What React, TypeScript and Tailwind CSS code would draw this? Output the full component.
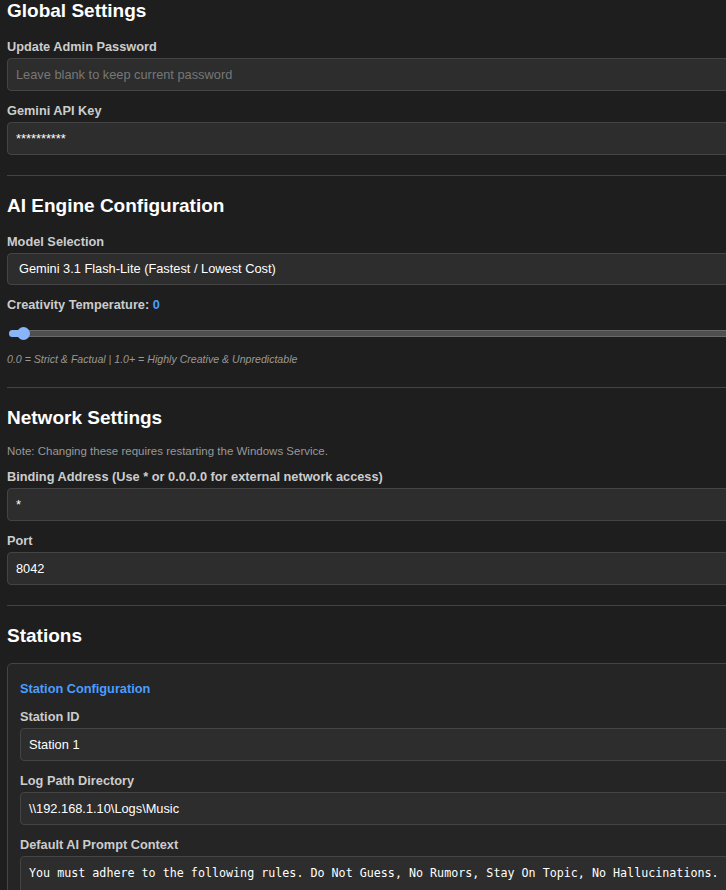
import React from "react";

const sans = { fontFamily: '"Liberation Sans", Arial, sans-serif' };

function Label({ children }: { children: React.ReactNode }) {
  return (
    <label className="block text-[12.75px] leading-[16px] font-bold text-[#cccccc] mb-[3px]">
      {children}
    </label>
  );
}

function TextBox({ value, placeholder }: { value?: string; placeholder?: string }) {
  return (
    <div className="h-[33px] flex items-center px-[8px] bg-[#2d2d2d] border border-[#444444] rounded-[4px] text-[12.8px]">
      {value ? (
        <span className="text-white">{value}</span>
      ) : (
        <span className="text-[#777777]">{placeholder}</span>
      )}
    </div>
  );
}

function Field({
  label,
  value,
  placeholder,
  last,
}: {
  label: string;
  value?: string;
  placeholder?: string;
  last?: boolean;
}) {
  return (
    <div className={last ? "" : "mb-[12px]"}>
      <Label>{label}</Label>
      <TextBox value={value} placeholder={placeholder} />
    </div>
  );
}

function Heading({ children }: { children: React.ReactNode }) {
  return (
    <h2 className="text-[19px] leading-[22px] font-bold text-white mb-[17px]">{children}</h2>
  );
}

function Divider() {
  return <hr className="border-0 border-t border-[#444444] mt-[20px] mb-[19px]" />;
}

export default function App() {
  return (
    <div className="w-[726px] h-[890px] overflow-hidden bg-[#1e1e1e]" style={sans}>
      <div className="w-[800px] pl-[7px]">
        {/* Global */}
        <Heading>Global Settings</Heading>
        <Field label="Update Admin Password" placeholder="Leave blank to keep current password" />
        <Field label="Gemini API Key" value="**********" last />

        <Divider />

        {/* AI Engine */}
        <Heading>AI Engine Configuration</Heading>
        <div className="mb-[12px]">
          <Label>Model Selection</Label>
          <div className="h-[32px] flex items-center pl-[11px] bg-[#2d2d2d] border border-[#444444] rounded-[4px] text-[12.8px] text-white">
            Gemini 3.1 Flash-Lite (Fastest / Lowest Cost)
          </div>
        </div>
        <Label>
          Creativity Temperature: <span className="text-[#4a9eff]">0</span>
        </Label>
        <div className="relative h-[36px]">
          <div className="absolute left-[2px] right-0 top-[14px] h-[7px] rounded-full bg-[#4f4f4f] border border-[#6a6a6a]" />
          <div className="absolute left-[2px] w-[14px] top-[14px] h-[7px] rounded-l-full bg-[#8ab4f8]" />
          <div className="absolute left-[10px] top-[11px] w-[13px] h-[13px] rounded-full bg-[#8ab4f8]" />
        </div>
        <p className="text-[10.6px] leading-[15px] italic text-[#999999]">
          0.0 = Strict &amp; Factual | 1.0+ = Highly Creative &amp; Unpredictable
        </p>

        <Divider />

        {/* Network */}
        <Heading>Network Settings</Heading>
        <p className="text-[11.5px] leading-[14px] text-[#999999] -mt-[2px] mb-[11px]">
          Note: Changing these requires restarting the Windows Service.
        </p>
        <Field label="Binding Address (Use * or 0.0.0.0 for external network access)" value="*" />
        <Field label="Port" value="8042" last />

        <Divider />

        {/* Stations */}
        <Heading>Stations</Heading>
        <div className="-mt-[1px] bg-[#252525] border border-[#444444] rounded-[5px] px-[12px] pt-[17px] pb-[12px]">
          <h3 className="text-[12.75px] leading-[16px] font-bold text-[#4a9eff] mb-[12px]">
            Station Configuration
          </h3>
          <Field label="Station ID" value="Station 1" />
          <Field label="Log Path Directory" value="\\192.168.1.10\Logs\Music" />
          <div>
            <Label>Default AI Prompt Context</Label>
            <div
              className="h-[80px] bg-[#2d2d2d] border border-[#444444] rounded-[4px] px-[8px] pt-[8px] text-[11.7px] leading-[16px] text-white whitespace-pre"
              style={{ fontFamily: '"DejaVu Sans Mono", Consolas, monospace' }}
            >
              You must adhere to the following rules. Do Not Guess, No Rumors, Stay On Topic, No Hallucinations.
            </div>
          </div>
        </div>
      </div>
    </div>
  );
}
